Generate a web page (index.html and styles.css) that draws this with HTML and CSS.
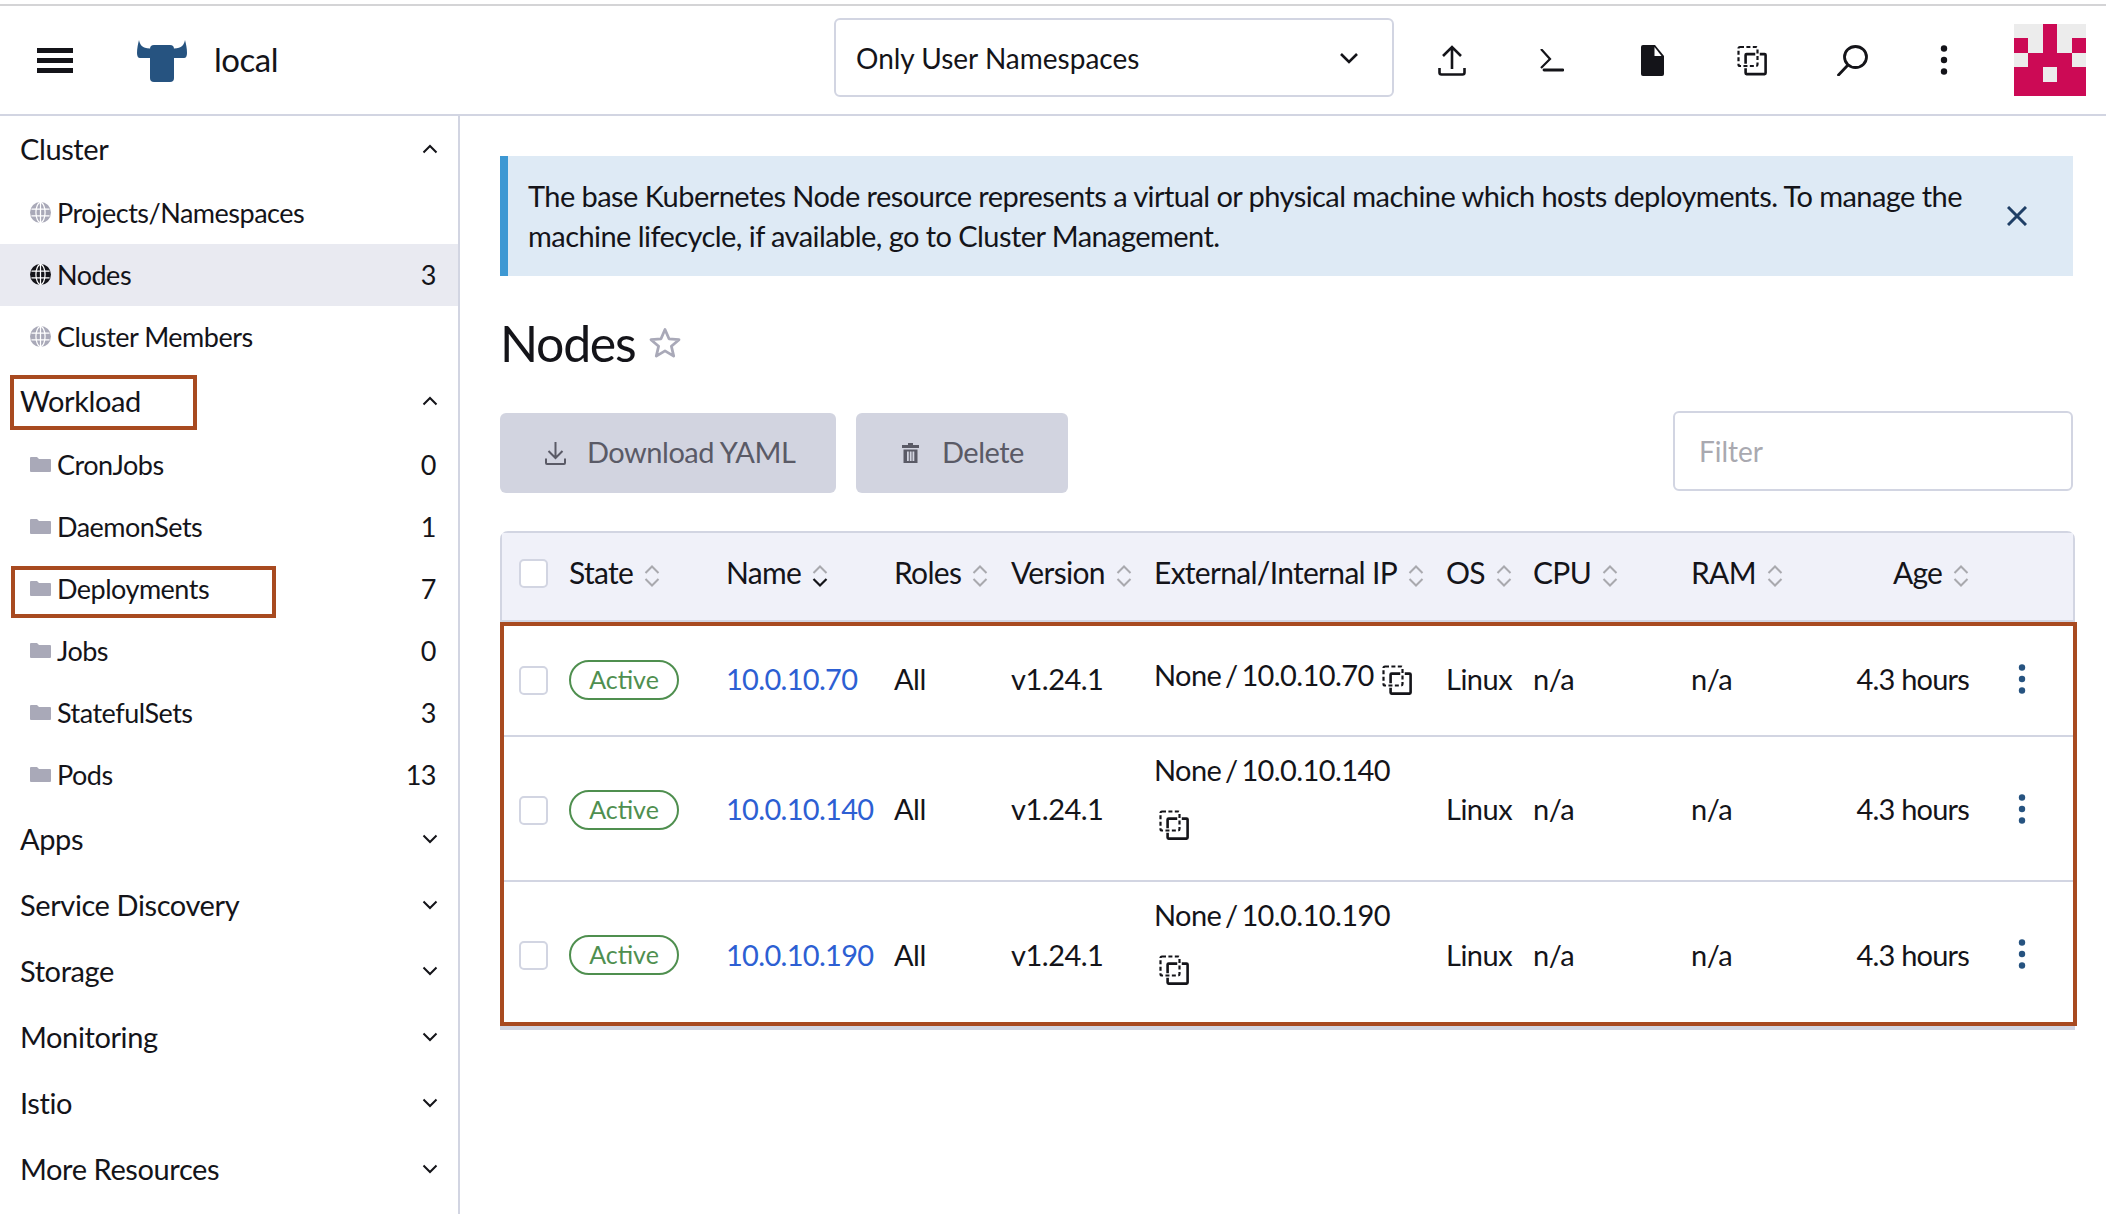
FILE: index.html
```html
<!DOCTYPE html>
<html lang="en">
<head>
    <meta charset="UTF-8">
    <title>Nodes - local</title>
    <link rel="stylesheet" href="styles.css">
</head>
<body>

<svg class="defs" width="0" height="0">
    <symbol id="copy" viewBox="0 0 30 30">
        <rect x="8.600" y="8.600" width="20" height="20" rx="1" fill="none" stroke="currentColor" stroke-width="2.600"/>
        <path d="M20.500 5.500v7M5.500 20.500h7" fill="none" stroke="#fff" stroke-width="4.500"/>
        <rect x="1.500" y="1.500" width="19" height="19" rx="1.500" fill="none" stroke="currentColor" stroke-width="2.200" stroke-dasharray="4 2.400"/>
    </symbol>
    <symbol id="sort" viewBox="0 0 16 24">
        <path d="M1.500 9 8 2.500 14.500 9" fill="none" stroke="#a9a9ae" stroke-width="2"/>
        <path d="M1.500 15 8 21.500 14.500 15" fill="none" stroke="#a9a9ae" stroke-width="2"/>
    </symbol>
    <symbol id="sortDown" viewBox="0 0 16 24">
        <path d="M1.500 9 8 2.500 14.500 9" fill="none" stroke="#a9a9ae" stroke-width="2"/>
        <path d="M1.500 15 8 21.500 14.500 15" fill="none" stroke="#141419" stroke-width="2.200"/>
    </symbol>
    <symbol id="globe" viewBox="0 0 22 22">
        <circle cx="11" cy="11" r="11" fill="currentColor"/>
        <g fill="none" stroke="#fff" stroke-width="1.300">
            <ellipse cx="11" cy="11" rx="4.800" ry="10.500"/>
            <path d="M11 .5v21M1.500 7.500h19M1.500 14.500h19"/>
        </g>
    </symbol>
    <symbol id="folder" viewBox="0 0 21 15">
        <path d="M1 0h6l2 2h11a1 1 0 0 1 1 1V14a1 1 0 0 1-1 1H1a1 1 0 0 1-1-1V1a1 1 0 0 1 1-1z" fill="currentColor"/>
    </symbol>
    <symbol id="chevUp" viewBox="0 0 16 10">
        <path d="M1.500 8.500 8 2l6.500 6.500" fill="none" stroke="currentColor" stroke-width="2"/>
    </symbol>
    <symbol id="chevDown" viewBox="0 0 16 10">
        <path d="M1.500 1.500 8 8l6.500-6.500" fill="none" stroke="currentColor" stroke-width="2"/>
    </symbol>
    <symbol id="kebab" viewBox="0 0 8 30">
        <circle cx="4" cy="3.500" r="3.200" fill="currentColor"/>
        <circle cx="4" cy="15" r="3.200" fill="currentColor"/>
        <circle cx="4" cy="26.500" r="3.200" fill="currentColor"/>
    </symbol>
</svg>

<header class="topbar">
    <div class="topbar-left">
        <div class="burger"><span></span><span></span><span></span></div>
        <svg class="bull" viewBox="0 0 50 43">
            <rect x="13" y="6" width="24" height="37" rx="4" fill="#265380"/>
            <path d="M2 1C3 6 5 9 13 9.500V19H3C1 19 0 17 0 14 0 9 1 5 2 1z" fill="#265380"/>
            <path d="M48 1C47 6 45 9 37 9.500V19H47C49 19 50 17 50 14 50 9 49 5 48 1z" fill="#265380"/>
        </svg>
        <span class="cluster-name">local</span>
    </div>
    <div class="ns-select">
        <span>Only User Namespaces</span>
        <svg class="ns-arrow" viewBox="0 0 20 12"><path d="M2 2l8 8 8-8" fill="none" stroke="#141419" stroke-width="2.600"/></svg>
    </div>
    <div class="tool">
        <svg width="28" height="31" viewBox="0 0 28 31"><path d="M14 24V2M5 11l9-9 9 9M1.500 23v4.500a2 2 0 0 0 2 2h21a2 2 0 0 0 2-2V23" fill="none" stroke="#141419" stroke-width="2.600"/></svg>
    </div>
    <div class="tool">
        <svg width="24" height="23" viewBox="0 0 24 23"><path d="M1 1l9 10-9 9" fill="none" stroke="#141419" stroke-width="2.200" transform="translate(0 -1)"/><path d="M4 21h19" fill="none" stroke="#141419" stroke-width="2.800" stroke-linecap="round"/></svg>
    </div>
    <div class="tool">
        <svg width="23" height="31" viewBox="0 0 23 31"><path d="M2 0h12l9 11v18a2 2 0 0 1-2 2H2a2 2 0 0 1-2-2V2a2 2 0 0 1 2-2z" fill="#141419"/><path d="M13.500 2v9h7z" fill="#fff"/></svg>
    </div>
    <div class="tool">
        <svg width="30" height="31"><use href="#copy"/></svg>
    </div>
    <div class="tool">
        <svg width="31" height="31" viewBox="0 0 31 31"><ellipse cx="18.500" cy="12" rx="11" ry="10.500" fill="none" stroke="#141419" stroke-width="2.800"/><path d="M10 21 1.500 30" fill="none" stroke="#141419" stroke-width="2.800" stroke-linecap="round"/></svg>
    </div>
    <div class="tool tool-kebab">
        <svg width="8" height="30"><use href="#kebab"/></svg>
    </div>
    <div class="avatar">
        <i></i><i></i><i class="on"></i><i></i><i></i>
        <i class="on"></i><i></i><i class="on"></i><i></i><i class="on"></i>
        <i></i><i class="on"></i><i class="on"></i><i class="on"></i><i></i>
        <i class="on"></i><i class="on"></i><i></i><i class="on"></i><i class="on"></i>
        <i class="on"></i><i class="on"></i><i class="on"></i><i class="on"></i><i class="on"></i>
    </div>
</header>

<div class="page">
    <nav class="sidebar">
        <div class="group">Cluster <svg class="chev"><use href="#chevUp"/></svg></div>
        <div class="item"><svg class="ico"><use href="#globe"/></svg>Projects/Namespaces</div>
        <div class="item active"><svg class="ico"><use href="#globe"/></svg>Nodes<span class="count">3</span></div>
        <div class="item"><svg class="ico"><use href="#globe"/></svg>Cluster Members</div>

        <div class="group">Workload <svg class="chev"><use href="#chevUp"/></svg></div>
        <div class="item"><svg class="ico folder"><use href="#folder"/></svg>CronJobs<span class="count">0</span></div>
        <div class="item"><svg class="ico folder"><use href="#folder"/></svg>DaemonSets<span class="count">1</span></div>
        <div class="item"><svg class="ico folder"><use href="#folder"/></svg>Deployments<span class="count">7</span></div>
        <div class="item"><svg class="ico folder"><use href="#folder"/></svg>Jobs<span class="count">0</span></div>
        <div class="item"><svg class="ico folder"><use href="#folder"/></svg>StatefulSets<span class="count">3</span></div>
        <div class="item"><svg class="ico folder"><use href="#folder"/></svg>Pods<span class="count">13</span></div>

        <div class="group">Apps <svg class="chev"><use href="#chevDown"/></svg></div>
        <div class="group">Service Discovery <svg class="chev"><use href="#chevDown"/></svg></div>
        <div class="group">Storage <svg class="chev"><use href="#chevDown"/></svg></div>
        <div class="group">Monitoring <svg class="chev"><use href="#chevDown"/></svg></div>
        <div class="group">Istio <svg class="chev"><use href="#chevDown"/></svg></div>
        <div class="group">More Resources <svg class="chev"><use href="#chevDown"/></svg></div>
    </nav>

    <main class="content">
        <div class="banner">
            <p>The base Kubernetes Node resource represents a virtual or physical machine which hosts deployments. To manage the machine lifecycle, if available, go to Cluster Management.</p>
            <svg class="banner-close" viewBox="0 0 20 20"><path d="M1 1l18 18M19 1 1 19" fill="none" stroke="#1f3f66" stroke-width="3"/></svg>
        </div>

        <div class="title-row">
            <h1>Nodes</h1>
            <svg class="star" viewBox="0 0 32 32"><path d="M16 2.500l4 9.300 10 .9-7.600 6.600 2.300 9.800L16 23.900l-8.700 5.200 2.300-9.800L2 12.700l10-.9z" fill="none" stroke="#a9a9b8" stroke-width="2.800" stroke-linejoin="round"/></svg>
        </div>

        <div class="actions">
            <button class="btn btn-yaml">
                <svg width="21" height="24" viewBox="0 0 21 24"><path d="M10.500 1v15M3.500 10l7 7 7-7M1 17.500V22a1 1 0 0 0 1 1h17a1 1 0 0 0 1-1v-4.500" fill="none" stroke="#5a5a66" stroke-width="2"/></svg>
                <span>Download YAML</span>
            </button>
            <button class="btn btn-delete">
                <svg width="17" height="20" viewBox="0 0 17 20"><path d="M6 0h5v2h6v3H0V2h6zM1.500 6.500h14V20h-14zM5 8.500V18h1.800V8.500zM7.800 8.500V18h1.800V8.500zM10.500 8.500V18h1.800V8.500z" fill="#5a5a66" fill-rule="evenodd"/></svg>
                <span>Delete</span>
            </button>
            <div class="filter">Filter</div>
        </div>

        <table class="nodes">
            <colgroup>
                <col class="c-check"><col class="c-state"><col class="c-name"><col class="c-roles"><col class="c-version">
                <col class="c-ip"><col class="c-os"><col class="c-cpu"><col class="c-ram"><col class="c-age"><col class="c-more">
            </colgroup>
            <thead>
                <tr>
                    <th><span class="checkbox"></span></th>
                    <th>State<svg class="sort"><use href="#sort"/></svg></th>
                    <th>Name<svg class="sort"><use href="#sortDown"/></svg></th>
                    <th>Roles<svg class="sort"><use href="#sort"/></svg></th>
                    <th>Version<svg class="sort"><use href="#sort"/></svg></th>
                    <th>External/Internal IP<svg class="sort"><use href="#sort"/></svg></th>
                    <th>OS<svg class="sort"><use href="#sort"/></svg></th>
                    <th>CPU<svg class="sort"><use href="#sort"/></svg></th>
                    <th>RAM<svg class="sort"><use href="#sort"/></svg></th>
                    <th class="age">Age<svg class="sort"><use href="#sort"/></svg></th>
                    <th class="last"></th>
                </tr>
            </thead>
            <tbody>
                <tr>
                    <td><span class="checkbox"></span></td>
                    <td><span class="badge">Active</span></td>
                    <td><a class="link">10.0.10.70</a></td>
                    <td>All</td>
                    <td>v1.24.1</td>
                    <td class="ip">None / 10.0.10.70 <svg class="copy"><use href="#copy"/></svg></td>
                    <td>Linux</td>
                    <td>n/a</td>
                    <td>n/a</td>
                    <td class="age">4.3 hours</td>
                    <td class="last"><svg class="more"><use href="#kebab"/></svg></td>
                </tr>
                <tr>
                    <td><span class="checkbox"></span></td>
                    <td><span class="badge">Active</span></td>
                    <td><a class="link">10.0.10.140</a></td>
                    <td>All</td>
                    <td>v1.24.1</td>
                    <td class="ip">None / 10.0.10.140 <svg class="copy"><use href="#copy"/></svg></td>
                    <td>Linux</td>
                    <td>n/a</td>
                    <td>n/a</td>
                    <td class="age">4.3 hours</td>
                    <td class="last"><svg class="more"><use href="#kebab"/></svg></td>
                </tr>
                <tr>
                    <td><span class="checkbox"></span></td>
                    <td><span class="badge">Active</span></td>
                    <td><a class="link">10.0.10.190</a></td>
                    <td>All</td>
                    <td>v1.24.1</td>
                    <td class="ip">None / 10.0.10.190 <svg class="copy"><use href="#copy"/></svg></td>
                    <td>Linux</td>
                    <td>n/a</td>
                    <td>n/a</td>
                    <td class="age">4.3 hours</td>
                    <td class="last"><svg class="more"><use href="#kebab"/></svg></td>
                </tr>
            </tbody>
        </table>
    </main>
</div>

<div class="mark mark-workload"></div>
<div class="mark mark-deployments"></div>
<div class="mark mark-rows"></div>

</body>
</html>
```

FILE: styles.css
```css
* {
    box-sizing: border-box;
}

html, body {
    margin: 0;
    height: 100%;
}

body {
    background: white;
    color: #141419;
    font-family: Lato, "Open Sans", sans-serif;
    font-size: 27px;
    letter-spacing: -0.5px;
    overflow: hidden;
    padding-top: 4px;
}

.defs {
    display: block;
    height: 0;
}

/* top bar */

.topbar {
    display: flex;
    align-items: center;
    height: 112px;
    border-top: 2px solid #d4d4d6;
    border-bottom: 2px solid #d2d5e2;
}

.topbar-left {
    display: flex;
    align-items: center;
    width: 834px;
    padding-left: 37px;
}

.burger {
    display: flex;
    flex-direction: column;
    gap: 5px;
    width: 36px;
}

.burger span {
    height: 5px;
    background: #141419;
}

.bull {
    width: 50px;
    height: 43px;
    margin-left: 64px;
}

.cluster-name {
    margin: 0 0 2px 27px;
    font-size: 33px;
}

.ns-select {
    display: flex;
    align-items: center;
    justify-content: space-between;
    width: 560px;
    height: 79px;
    margin-bottom: 5px;
    padding: 0 33px 0 20px;
    border: 2px solid #d2d5e2;
    border-radius: 6px;
    font-size: 28px;
    letter-spacing: 0;
}

.ns-arrow {
    width: 20px;
    height: 12px;
}

.tool {
    display: flex;
    justify-content: center;
    width: 100px;
}

.tool:nth-child(3) {
    margin-left: 8px;
}

.tool-kebab {
    width: 84px;
}

.avatar {
    display: grid;
    grid-template-columns: repeat(5, 14.4px);
    grid-auto-rows: 14.4px;
    width: 72px;
    margin-left: 28px;
}

.avatar i {
    background: #ececec;
}

.avatar i.on {
    background: #cc0a55;
}

/* sidebar */

.page {
    display: flex;
    height: calc(100% - 112px);
}

.sidebar {
    flex: none;
    width: 460px;
    border-right: 2px solid #d2d5e2;
}

.group {
    display: flex;
    align-items: center;
    justify-content: space-between;
    height: 66px;
    padding: 0 20px 2px 20px;
    font-size: 29px;
    letter-spacing: -0.4px;
}

.chev {
    width: 16px;
    height: 10px;
    margin-top: 2px;
}

.item {
    display: flex;
    align-items: center;
    height: 62px;
    padding: 0 22px 2px 30px;
}

.item.active {
    background: #e9eaf1;
}

.ico {
    flex: none;
    width: 21px;
    height: 21px;
    margin-right: 6px;
    color: #a9a9b8;
}

.ico.folder {
    height: 15px;
}

.active .ico {
    color: #141419;
}

.count {
    margin-left: auto;
}

/* main area */

.content {
    flex: 1;
    min-width: 0;
    padding: 40px 33px 0 40px;
}

.banner {
    display: flex;
    align-items: center;
    justify-content: space-between;
    height: 120px;
    padding: 0 46px 0 20px;
    background: #deeaf5;
    border-left: 8px solid #3d98d3;
}

.banner p {
    margin: 0;
    width: 1470px;
    font-size: 29px;
    letter-spacing: -0.56px;
    line-height: 40px;
}

.banner-close {
    flex: none;
    width: 20px;
    height: 20px;
}

.title-row {
    display: flex;
    align-items: center;
    height: 66px;
    margin-top: 34px;
}

.title-row h1 {
    margin: 0;
    font-size: 50px;
    font-weight: 400;
    letter-spacing: -1.300px;
}

.star {
    width: 32px;
    height: 32px;
    margin-left: 14px;
}

.actions {
    display: flex;
    align-items: center;
    margin-top: 35px;
}

.btn {
    display: flex;
    align-items: center;
    gap: 21px;
    height: 80px;
    border: none;
    border-radius: 6px;
    background: #d2d4e0;
    color: #5a5a66;
    font-family: inherit;
    font-size: 29px;
    letter-spacing: -0.5px;
}

.btn span {
    margin-bottom: 2px;
}

.btn-yaml {
    width: 336px;
    padding-left: 45px;
}

.btn-delete {
    width: 212px;
    margin-left: 20px;
    padding-left: 46px;
    gap: 23px;
}

.filter {
    width: 400px;
    height: 80px;
    margin: 0 0 3px auto;
    padding: 0 24px;
    border: 2px solid #d2d5e2;
    border-radius: 6px;
    color: #a9a9b0;
    font-size: 28px;
    letter-spacing: 0;
    line-height: 76px;
}

/* table */

.nodes {
    width: 1575px;
    margin-top: 37px;
    border-collapse: separate;
    border-spacing: 0;
    table-layout: fixed;
    border: 2px solid #d2d5e2;
    border-radius: 8px 8px 0 0;
}

.c-check { width: 67px; }
.c-state { width: 157px; }
.c-name { width: 168px; }
.c-roles { width: 117px; }
.c-version { width: 143px; }
.c-ip { width: 292px; }
.c-os { width: 87px; }
.c-cpu { width: 158px; }
.c-ram { width: 130px; }
.c-age { width: 148px; }

th, td {
    padding: 0 24px 0 0;
    text-align: left;
    font-weight: 400;
    vertical-align: middle;
}

th {
    height: 89px;
    padding-bottom: 9px;
    background: #f0f1f9;
    border-bottom: 2px solid #d2d5e2;
    font-size: 30px;
    letter-spacing: -0.7px;
    white-space: nowrap;
}

td {
    height: 115px;
    border-bottom: 2px solid #d2d5e2;
    font-size: 29px;
}

th:first-child, td:first-child {
    padding: 0 0 0 17px;
}

th:first-child {
    padding-bottom: 6px;
}

tbody tr:nth-child(2) td {
    height: 145px;
}

tbody tr:nth-child(3) td {
    height: 146px;
}

th.age, td.age {
    padding-right: 0;
    letter-spacing: -0.8px;
    text-align: right;
}

th.last, td.last {
    padding: 0 0 0 2px;
}

.checkbox {
    display: block;
    width: 29px;
    height: 29px;
    background: white;
    border: 2px solid #d2d5e2;
    border-radius: 5px;
}

td .checkbox {
    margin-top: 3px;
}

.sort {
    width: 16px;
    height: 24px;
    margin-left: 11px;
    vertical-align: middle;
}

.badge {
    display: block;
    width: 110px;
    height: 40px;
    margin-top: 2px;
    border: 2px solid #4f8f4f;
    border-radius: 20px;
    color: #4f8f4f;
    font-size: 25px;
    letter-spacing: 0;
    line-height: 35px;
    text-align: center;
}

.link {
    color: #2d5fd3;
    letter-spacing: -0.7px;
}

td.ip {
    padding-bottom: 28px;
    line-height: 50px;
    letter-spacing: -0.6px;
    word-spacing: -3px;
}

tbody tr:first-child td.ip {
    padding-bottom: 8px;
}

.copy {
    width: 30px;
    height: 30px;
    margin-left: 5px;
    vertical-align: -9px;
}

.more {
    display: block;
    width: 8px;
    height: 30px;
    margin: 0 auto;
    color: #265380;
}

/* red annotation boxes drawn over the screenshot */

.mark {
    position: absolute;
    border: 4px solid #a84a20;
}

.mark-workload {
    left: 10px;
    top: 375px;
    width: 187px;
    height: 55px;
}

.mark-deployments {
    left: 11px;
    top: 566px;
    width: 265px;
    height: 52px;
}

.mark-rows {
    left: 500px;
    top: 622px;
    width: 1577px;
    height: 404px;
}
```
